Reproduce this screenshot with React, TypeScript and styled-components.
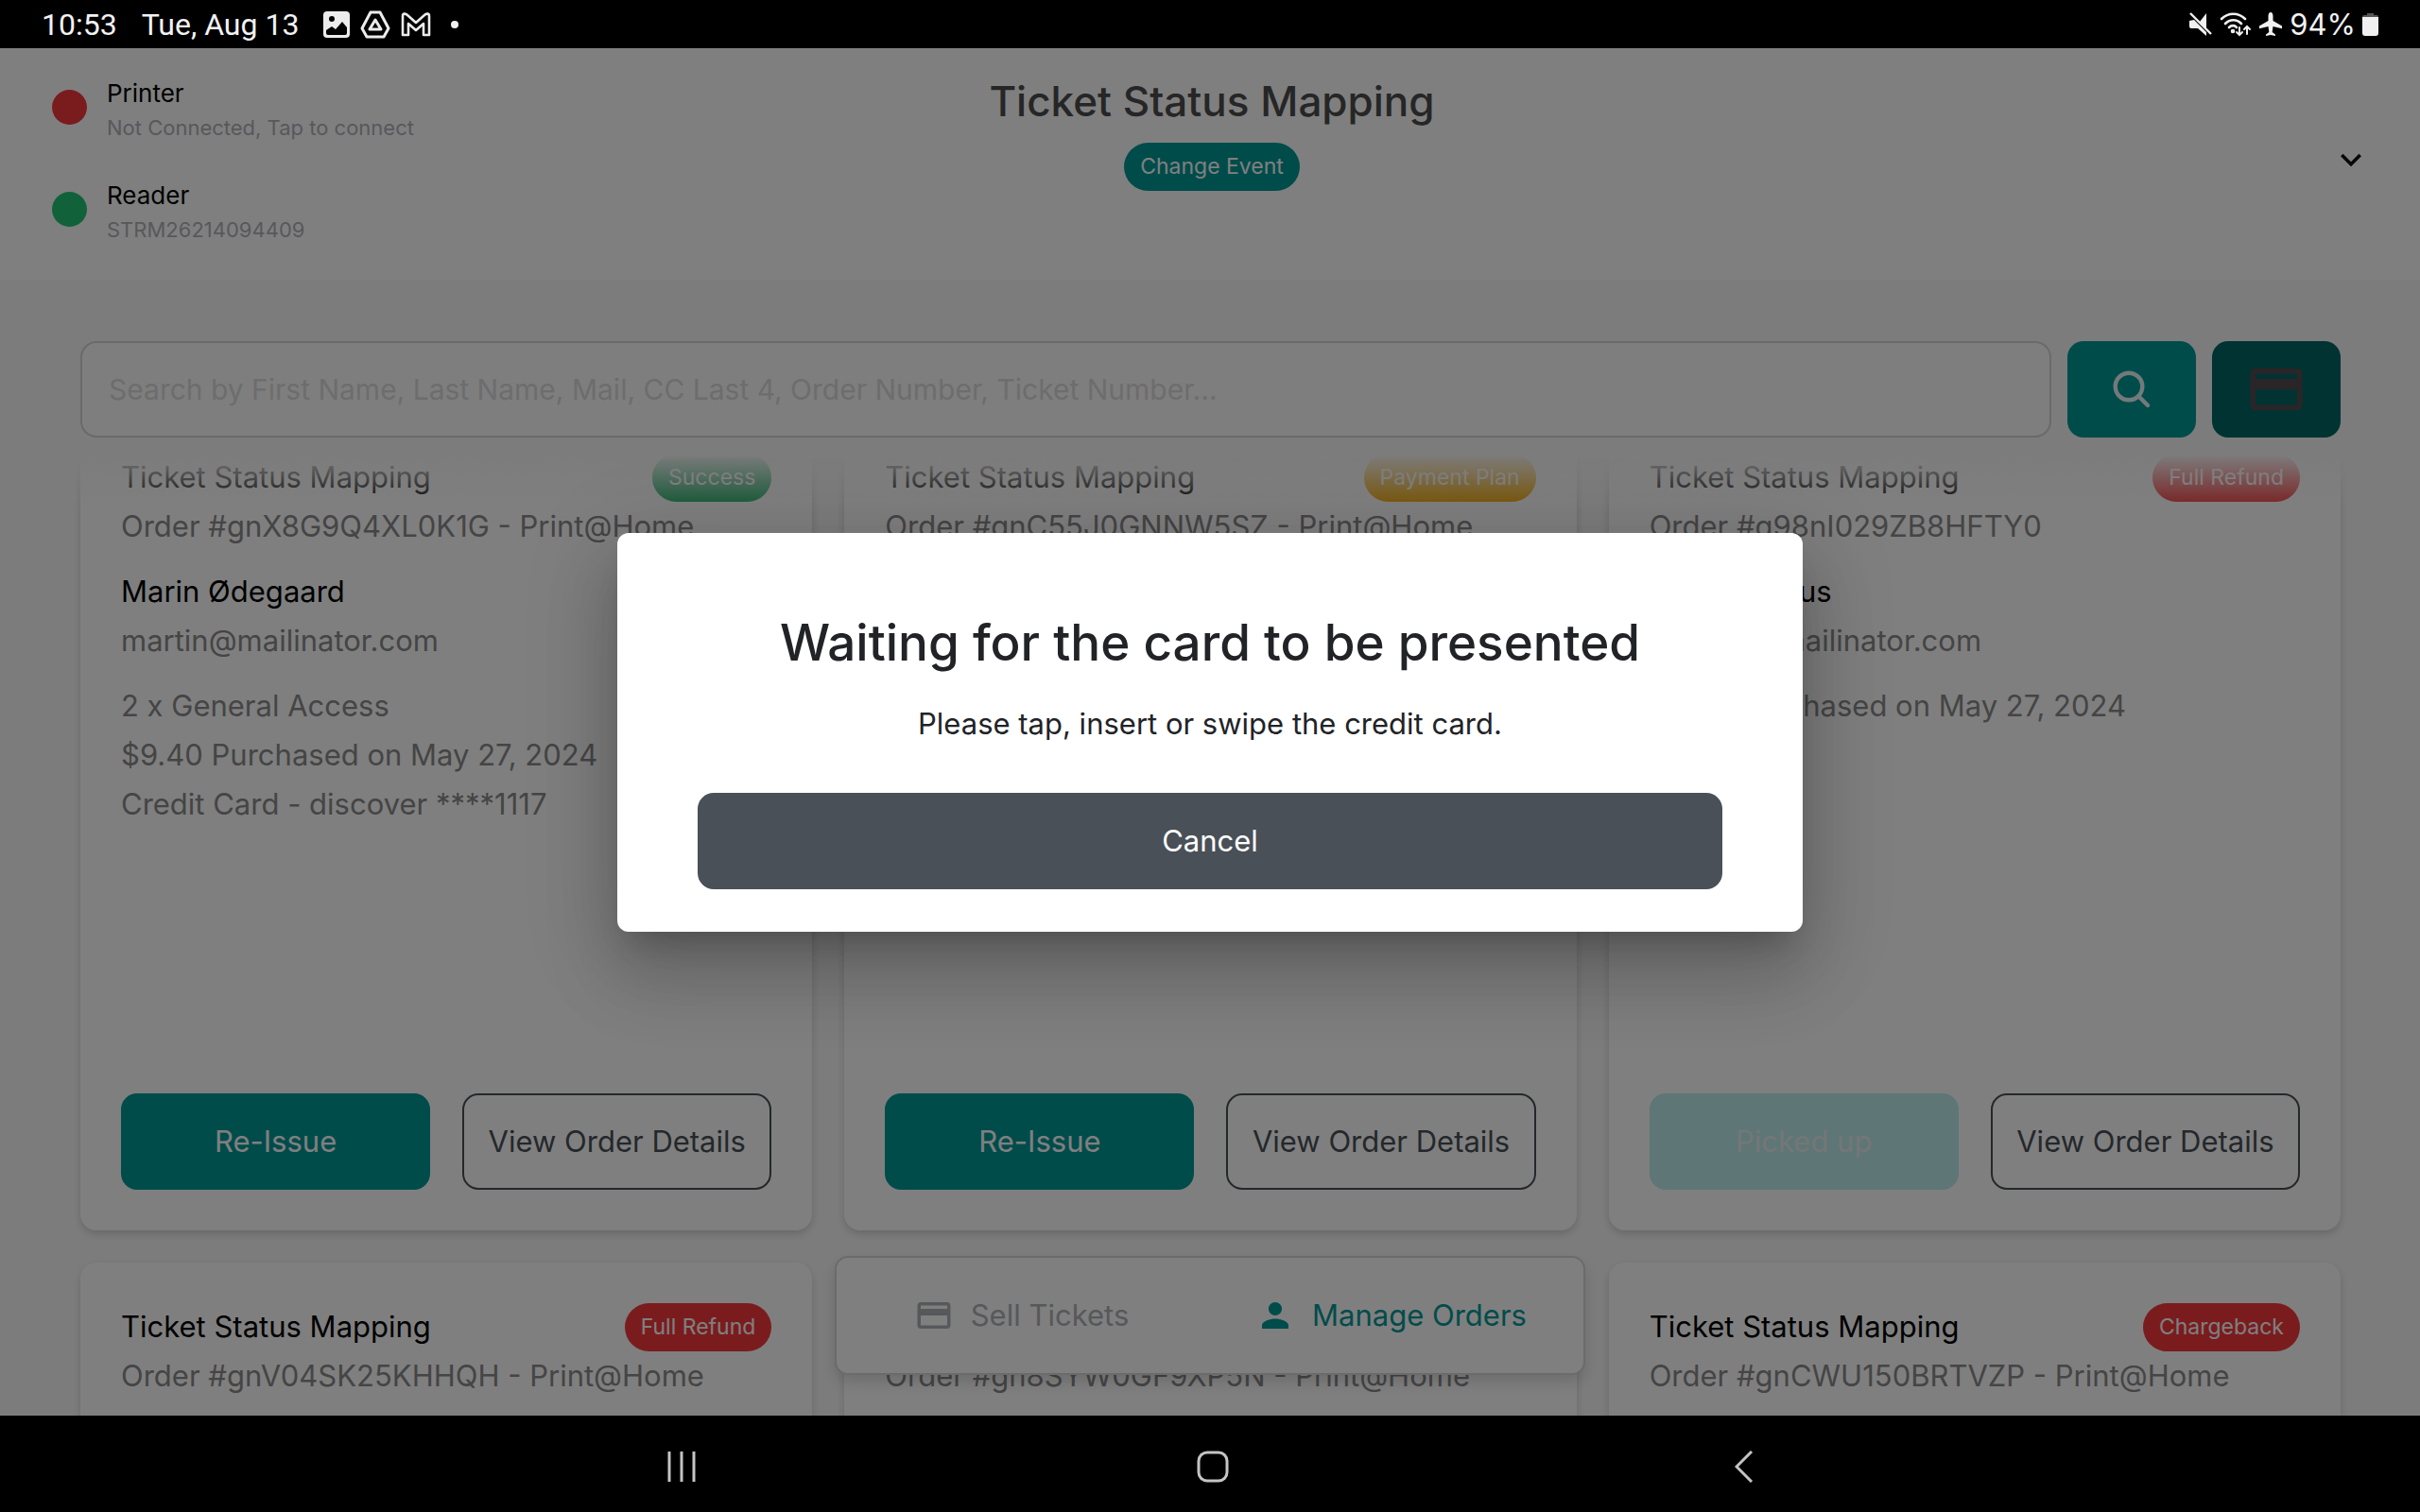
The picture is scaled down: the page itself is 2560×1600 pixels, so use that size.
import React from "react";
import styled, { createGlobalStyle } from "styled-components";
import { MdCreditCard, MdExpandMore, MdPerson } from "react-icons/md";

const GlobalStyle = createGlobalStyle`
  *, *::before, *::after { box-sizing: border-box; }
  body { margin: 0; background: #000; }
  h1, h2, h3, p { margin: 0; font-weight: 400; }
  button, input { font: inherit; }
  button { border: 0; padding: 0; background: none; cursor: pointer; }
`;

const Screen = styled.div`
  display: flex;
  flex-direction: column;
  height: 100vh;
  overflow: hidden;
  font-family: Inter, "Liberation Sans", sans-serif;
  font-size: 31px;
  line-height: 52px;
  color: #000;
`;

/* ---------- system bars ---------- */

const StatusBar = styled.div`
  flex: none;
  display: flex;
  justify-content: space-between;
  align-items: center;
  height: 51px;
  padding: 0 44px;
  background: #000;
  color: #f2f2f2;
  font-family: Roboto, "Liberation Sans", sans-serif;
  font-size: 32px;
`;

const StatusGroup = styled.div<{ $gap: number }>`
  display: flex;
  align-items: center;
  gap: ${(p) => p.$gap}px;
`;

const BatteryLevel = styled.span`
  font-family: Inter, "Liberation Sans", sans-serif;
  font-size: 31px;
`;

const SystemNav = styled.nav`
  flex: none;
  display: grid;
  grid-template-columns: repeat(3, 22%);
  justify-content: center;
  align-items: center;
  height: 102px;
  padding: 6px 0 0 6px;
  background: #000;
`;

const SystemButton = styled.button`
  display: flex;
  justify-content: center;
  align-items: center;
  color: #c4c4c4;
`;

/* ---------- app header ---------- */

const AppArea = styled.div`
  position: relative;
  flex: 1;
  min-height: 0;
  display: flex;
  flex-direction: column;
  background: #f9f9f9;
`;

const Header = styled.header`
  display: grid;
  grid-template-columns: 1fr auto 1fr;
  padding: 29px 51px 34px 55px;
  background: #fff;
`;

const Devices = styled.div`
  display: flex;
  flex-direction: column;
  gap: 34px;
`;

const Device = styled.div`
  display: flex;
  align-items: center;
  gap: 21px;
`;

const Dot = styled.span<{ $color: string }>`
  width: 37px;
  height: 37px;
  margin-bottom: 8px;
  border-radius: 50%;
  background: ${(p) => p.$color};
`;

const DeviceName = styled.p`
  font-size: 26px;
  line-height: 37px;
`;

const DeviceState = styled.p`
  font-size: 22px;
  line-height: 37px;
  color: #b0b0b6;
`;

const EventBlock = styled.div`
  display: flex;
  flex-direction: column;
  align-items: center;
  gap: 17px;
`;

const EventTitle = styled.h1`
  font-size: 44px;
  line-height: 54px;
  font-weight: 500;
  color: #4c4c4c;
`;

const PillButton = styled.button`
  height: 51px;
  padding: 0 17px;
  border-radius: 26px;
  background: #009896;
  color: #fff;
  font-size: 23px;
  line-height: 51px;
`;

const HeaderToggle = styled.button`
  justify-self: end;
  align-self: center;
  display: flex;
  margin-bottom: 4px;
  color: #111;
`;

/* ---------- search ---------- */

const SearchRow = styled.form`
  display: flex;
  gap: 17px;
  padding: 65px 84px 0 85px;
`;

const SearchInput = styled.input`
  flex: 1;
  min-width: 0;
  height: 102px;
  padding: 0 28px;
  border: 2px solid #d4d4d8;
  border-radius: 17px;
  background: #fdfdfd;
  color: #212529;
  font-size: 30px;
  &::placeholder { color: #dadada; opacity: 1; }
`;

const IconButton = styled.button<{ $bg: string; $fg: string }>`
  display: flex;
  justify-content: center;
  align-items: center;
  width: 136px;
  height: 102px;
  border-radius: 17px;
  background: ${(p) => p.$bg};
  color: ${(p) => p.$fg};
`;

/* ---------- orders ---------- */

const OrderList = styled.main`
  position: relative;
  flex: 1;
  min-height: 0;
  overflow: hidden;
  padding: 0 84px 0 85px;
  &::before {
    content: "";
    position: absolute;
    inset: 0 0 auto;
    height: 76px;
    background: linear-gradient(#f9f9f9 24%, rgba(249, 249, 249, 0));
  }
`;

const OrderGrid = styled.div`
  display: grid;
  grid-template-columns: repeat(3, 1fr);
  gap: 34px;
  margin-top: -26px;
`;

const Card = styled.article`
  display: flex;
  flex-direction: column;
  gap: 17px;
  min-height: 865px;
  padding: 42px 43px 43px;
  border-radius: 17px;
  background: #fff;
  box-shadow: 0 4px 8px rgba(0, 0, 0, 0.16);
`;

const CardHead = styled.div`
  display: flex;
  justify-content: space-between;
  align-items: center;
`;

const Badge = styled.span<{ $color: string }>`
  height: 51px;
  padding: 0 17px;
  border-radius: 26px;
  background: ${(p) => p.$color};
  color: #fff;
  font-size: 23px;
  line-height: 51px;
`;

const Strong = styled.h3`
  font-size: 31px;
`;

const Muted = styled.p`
  color: #8a8a8a;
  white-space: nowrap;
`;

const CardActions = styled.div`
  display: grid;
  grid-template-columns: 1fr 1fr;
  gap: 34px;
  margin-top: auto;
`;

const ActionButton = styled.button<{ $kind: "solid" | "outline" }>`
  height: 102px;
  border: ${(p) => (p.$kind === "outline" ? "2px solid #495057" : "0")};
  border-radius: 17px;
  background: ${(p) => (p.$kind === "outline" ? "#fff" : "#009896")};
  color: ${(p) => (p.$kind === "outline" ? "#495057" : "#fff")};
  white-space: nowrap;
  &:disabled { background: #bcecec; color: #e8eeee; }
`;

/* ---------- floating tabs ---------- */

const Tabs = styled.nav`
  position: absolute;
  left: 50%;
  bottom: 43px;
  transform: translateX(-50%);
  display: grid;
  grid-template-columns: 1fr 1fr;
  width: 794px;
  height: 126px;
  padding-right: 8px;
  border: 2px solid #d6d6d6;
  border-radius: 14px;
  background: #fff;
  box-shadow: 0 8px 16px rgba(0, 0, 0, 0.14);
`;

const Tab = styled.a<{ $active?: boolean }>`
  display: flex;
  justify-content: center;
  align-items: center;
  gap: 18px;
  color: ${(p) => (p.$active ? "#009896" : "#adb1b5")};
  text-decoration: none;
`;

/* ---------- dialog ---------- */

const Backdrop = styled.div`
  position: absolute;
  inset: 0;
  display: flex;
  justify-content: center;
  align-items: center;
  background: rgba(0, 0, 0, 0.5);
`;

const Dialog = styled.section`
  display: flex;
  flex-direction: column;
  width: 49%;
  min-width: 1100px;
  padding: 77px 85px 45px;
  border-radius: 12px;
  background: #fff;
  box-shadow: 0 22px 30px -14px rgba(0, 0, 0, 0.2),
    0 48px 76px 6px rgba(0, 0, 0, 0.14), 0 18px 92px 16px rgba(0, 0, 0, 0.12);
  text-align: center;
`;

const DialogTitle = styled.h2`
  font-size: 53px;
  line-height: 78px;
  font-weight: 500;
  color: #212327;
  white-space: nowrap;
`;

const DialogText = styled.p`
  margin: 21px 0 47px;
  color: #212327;
`;

const CancelButton = styled.button`
  height: 102px;
  border-radius: 17px;
  background: #495057;
  color: #fff;
`;

/* ---------- icons ---------- */

const ImageIcon = () => (
  <svg width="28" height="28" viewBox="0 0 28 28" aria-hidden="true">
    <rect width="28" height="28" rx="4" fill="#ececec" />
    <circle cx="9" cy="8" r="3" fill="#000" />
    <path d="M3 20l6-4 4 3 7-8 5 6v6a2 2 0 0 1-2 2H5a2 2 0 0 1-2-2z" fill="#000" />
  </svg>
);

const DriveIcon = () => (
  <svg width="32" height="30" viewBox="0 0 32 30" fill="none" stroke="#ececec" strokeWidth="3" strokeLinejoin="round" aria-hidden="true">
    <path d="M11 2h10l9 17-5 9H7l-5-9z" />
    <path d="M16 10l6 10H10z" />
  </svg>
);

const MailIcon = () => (
  <svg width="32" height="26" viewBox="0 0 32 26" fill="none" stroke="#ececec" strokeWidth="2.6" strokeLinejoin="round" aria-hidden="true">
    <path d="M2 24V4c0-3 3-3 5-1l9 8 9-8c2-2 5-2 5 1v20h-6V12l-8 7-8-7v12z" />
  </svg>
);

const MuteIcon = () => (
  <svg width="26" height="26" viewBox="0 0 26 26" fill="#f0f0f0" aria-hidden="true">
    <path d="M19 1v17L12 10zM1 9l5-1 13 13v4l-9-8H3a2 2 0 0 1-2-2z" />
    <path d="M2 1l22 22" stroke="#f0f0f0" strokeWidth="2.4" />
  </svg>
);

const WifiIcon = () => (
  <svg width="34" height="26" viewBox="0 0 34 26" fill="none" stroke="#f0f0f0" strokeWidth="2.6" strokeLinecap="round" aria-hidden="true">
    <path d="M2 7c7-7 18-7 25 0M6 12c5-5 12-5 17 0M10 16c2.500-2.500 6-2.500 8 0" />
    <circle cx="14" cy="20" r="1" fill="#f0f0f0" />
    <path d="M21 16v8m-3-3l3 3 3-3M29 23v-8m-3 3l3-3 3 3" strokeWidth="2" />
  </svg>
);

const PlaneIcon = () => (
  <svg width="26" height="26" viewBox="0 0 26 26" fill="#f0f0f0" aria-hidden="true">
    <path d="M13 0c1.700 0 2.500 2 2.500 4v5L25 14.500v2.700L15.500 15l-.8 6 3.300 2.500V25L13 24l-5 1v-1.500l3.300-2.500-.8-6L1 17.200v-2.700L10.500 9V4c0-2 .8-4 2.500-4z" />
  </svg>
);

const BatteryIcon = () => (
  <svg width="17" height="26" viewBox="0 0 17 26" aria-hidden="true">
    <path d="M5 1h7v2h3a2 2 0 0 1 2 2H0a2 2 0 0 1 2-2h3z" fill="#555" />
    <path d="M0 5h17v17a3 3 0 0 1-3 3H3a3 3 0 0 1-3-3z" fill="#f0f0f0" />
  </svg>
);

const SearchIcon = () => (
  <svg width="42" height="42" viewBox="0 0 42 42" fill="none" stroke="currentColor" strokeWidth="4.4" strokeLinecap="round" aria-hidden="true">
    <circle cx="18" cy="18" r="14.300" />
    <path d="M28.500 28.500L38 38" />
  </svg>
);

/* ---------- data ---------- */

type Order = {
  id: string;
  method?: string;
  badge?: string;
  color?: string;
  name?: string;
  email?: string;
  lines?: string[];
  action?: string;
  done?: boolean;
};

const RED = "#f4393c";

const orders: Order[] = [
  {
    id: "gnX8G9Q4XL0K1G", method: "Print@Home", badge: "Success", color: "#22b068",
    name: "Marin Ødegaard", email: "martin@mailinator.com",
    lines: ["2 x General Access", "$9.40 Purchased on May 27, 2024", "Credit Card - discover ****1117"],
    action: "Re-Issue",
  },
  {
    id: "gnC55J0GNNW5SZ", method: "Print@Home", badge: "Payment Plan", color: "#f5a800",
    action: "Re-Issue",
  },
  {
    id: "g98nI029ZB8HFTY0", badge: "Full Refund", color: RED,
    name: "Robert Jesus", email: "marcus@mailinator.com",
    lines: ["$9.40 Purchased on May 27, 2024"],
    action: "Picked up", done: true,
  },
  { id: "gnV04SK25KHHQH", method: "Print@Home", badge: "Full Refund", color: RED },
  { id: "gn8SYW0GF9XP5N", method: "Print@Home" },
  { id: "gnCWU150BRTVZP", method: "Print@Home", badge: "Chargeback", color: RED },
];

const OrderCard = ({ order }: { order: Order }) => (
  <Card>
    <div>
      <CardHead>
        <Strong>Ticket Status Mapping</Strong>
        {order.badge && <Badge $color={order.color ?? RED}>{order.badge}</Badge>}
      </CardHead>
      <Muted>
        Order #{order.id}
        {order.method ? ` - ${order.method}` : ""}
      </Muted>
    </div>
    {order.name && (
      <div>
        <Strong>{order.name}</Strong>
        <Muted>{order.email}</Muted>
      </div>
    )}
    {order.lines && (
      <div>
        {order.lines.map((line) => (
          <Muted key={line}>{line}</Muted>
        ))}
      </div>
    )}
    {order.action && (
      <CardActions>
        <ActionButton type="button" $kind="solid" disabled={order.done}>{order.action}</ActionButton>
        <ActionButton type="button" $kind="outline">View Order Details</ActionButton>
      </CardActions>
    )}
  </Card>
);

export default function App() {
  return (
    <Screen>
      <GlobalStyle />
      <StatusBar>
        <StatusGroup $gap={26}>
          <span>10:53</span>
          <span>Tue, Aug 13</span>
          <StatusGroup $gap={11}>
            <ImageIcon />
            <DriveIcon />
            <MailIcon />
            <svg width="40" height="8" viewBox="0 0 40 8" aria-hidden="true">
              <circle cx="14" cy="4" r="4" fill="#f0f0f0" />
            </svg>
          </StatusGroup>
        </StatusGroup>
        <StatusGroup $gap={7}>
          <MuteIcon />
          <WifiIcon />
          <PlaneIcon />
          <BatteryLevel>94%</BatteryLevel>
          <BatteryIcon />
        </StatusGroup>
      </StatusBar>

      <AppArea>
        <Header>
          <Devices>
            <Device>
              <Dot $color={RED} />
              <div>
                <DeviceName>Printer</DeviceName>
                <DeviceState>Not Connected, Tap to connect</DeviceState>
              </div>
            </Device>
            <Device>
              <Dot $color="#22c276" />
              <div>
                <DeviceName>Reader</DeviceName>
                <DeviceState>STRM26214094409</DeviceState>
              </div>
            </Device>
          </Devices>
          <EventBlock>
            <EventTitle>Ticket Status Mapping</EventTitle>
            <PillButton type="button">Change Event</PillButton>
          </EventBlock>
          <HeaderToggle type="button" aria-label="Expand header">
            <MdExpandMore size={44} />
          </HeaderToggle>
        </Header>

        <SearchRow onSubmit={(e) => e.preventDefault()}>
          <SearchInput
            type="text"
            aria-label="Search orders"
            placeholder="Search by First Name, Last Name, Mail, CC Last 4, Order Number, Ticket Number..."
          />
          <IconButton type="submit" aria-label="Search" $bg="#009896" $fg="#e6f4f4">
            <SearchIcon />
          </IconButton>
          <IconButton type="button" aria-label="Search by card" $bg="#006664" $fg="#564a50">
            <MdCreditCard size={66} />
          </IconButton>
        </SearchRow>

        <OrderList>
          <OrderGrid>
            {orders.map((order) => (
              <OrderCard key={order.id} order={order} />
            ))}
          </OrderGrid>
        </OrderList>

        <Tabs>
          <Tab href="#sell">
            <MdCreditCard size={42} />
            Sell Tickets
          </Tab>
          <Tab href="#orders" $active>
            <MdPerson size={42} />
            Manage Orders
          </Tab>
        </Tabs>

        <Backdrop>
          <Dialog role="dialog" aria-modal="true" aria-labelledby="dialog-title">
            <DialogTitle id="dialog-title">Waiting for the card to be presented</DialogTitle>
            <DialogText>Please tap, insert or swipe the credit card.</DialogText>
            <CancelButton type="button">Cancel</CancelButton>
          </Dialog>
        </Backdrop>
      </AppArea>

      <SystemNav>
        <SystemButton type="button" aria-label="Recent apps">
          <svg width="34" height="34" viewBox="0 0 34 34" stroke="currentColor" strokeWidth="3">
            <path d="M4 1v32M17 1v32M30 1v32" />
          </svg>
        </SystemButton>
        <SystemButton type="button" aria-label="Home">
          <svg width="34" height="34" viewBox="0 0 34 34" fill="none" stroke="currentColor" strokeWidth="3">
            <rect x="2" y="2" width="30" height="30" rx="9" />
          </svg>
        </SystemButton>
        <SystemButton type="button" aria-label="Back">
          <svg width="20" height="34" viewBox="0 0 20 34" fill="none" stroke="currentColor" strokeWidth="3">
            <path d="M18 1L2 17l16 16" />
          </svg>
        </SystemButton>
      </SystemNav>
    </Screen>
  );
}
